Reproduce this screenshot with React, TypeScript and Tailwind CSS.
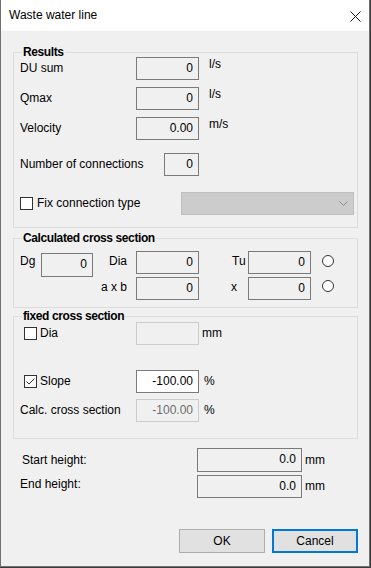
import type { ReactNode } from 'react';

type BoxKind = 'ro' | 'edit' | 'dis';

function Box({ value, className, kind = 'ro' }: { value: string; className: string; kind?: BoxKind }) {
  const look =
    kind === 'edit'
      ? 'border-[#7a7a7a] bg-white text-black'
      : kind === 'dis'
        ? 'border-[#cccccc] bg-[#f0f0f0] text-[#6d6d6d]'
        : 'border-[#7a7a7a] bg-[#f0f0f0] text-black';
  return (
    <div className={`flex items-center justify-end border pr-[5px] pb-[1px] ${look} ${className}`}>
      {value}
    </div>
  );
}

function Check({ checked = false }: { checked?: boolean }) {
  return (
    <div className="h-[13px] w-[13px] shrink-0 border border-[#333333] bg-white">
      {checked && (
        <svg width="11" height="11" viewBox="0 0 11 11" className="block">
          <polyline points="1.5,5.5 4,8 9.5,2.5" fill="none" stroke="#333333" strokeWidth="1" />
        </svg>
      )}
    </div>
  );
}

function Radio({ className }: { className: string }) {
  return <div className={`h-[12px] w-[12px] shrink-0 rounded-full border border-[#333333] bg-white ${className}`} />;
}

function Group({ title, className, children }: { title: string; className: string; children: ReactNode }) {
  return (
    <div className={`ml-[12px] mr-[11px] flex flex-col border border-[#dcdcdc] ${className}`}>
      <div className="-mt-[8px] -mb-[7px] ml-[8px] h-[15px] w-fit bg-[#f0f0f0] px-[1px] font-bold tracking-[-0.4px]">
        {title}
      </div>
      {children}
    </div>
  );
}

export default function App() {
  return (
    <div className="h-[568px] w-[371px] bg-[#3b3b3b] font-['Liberation_Sans',Arial,sans-serif] text-[12px] leading-[15px] text-black">
      <div className="flex h-[567px] w-[370px] flex-col border-x border-b border-[#707070] bg-[#f0f0f0]">
        {/* title bar */}
        <div className="flex h-[31px] shrink-0 items-center justify-between bg-white pl-[8px] pr-[8px]">
          <span>Waste water line</span>
          <svg width="11" height="11" viewBox="0 0 11 11" className="mt-[1px]">
            <line x1="0.5" y1="0.5" x2="10.5" y2="10.5" stroke="#111" strokeWidth="1" />
            <line x1="10.5" y1="0.5" x2="0.5" y2="10.5" stroke="#111" strokeWidth="1" />
          </svg>
        </div>

        <div className="flex flex-col">
          <Group title="Results" className="mt-[21px] pb-[12px]">
            <div className="mt-[4px] flex h-[23px] items-center pl-[6px]">
              <span className="w-[116px]">DU sum</span>
              <Box value="0" className="h-[23px] w-[63px]" />
              <span className="ml-[10px] self-start">l/s</span>
            </div>
            <div className="mt-[7px] flex h-[23px] items-center pl-[6px]">
              <span className="w-[116px]">Qmax</span>
              <Box value="0" className="h-[23px] w-[63px]" />
              <span className="ml-[10px] self-start">l/s</span>
            </div>
            <div className="mt-[7px] flex h-[23px] items-center pl-[6px]">
              <span className="w-[116px]">Velocity</span>
              <Box value="0.00" className="h-[23px] w-[63px]" />
              <span className="ml-[10px] self-start">m/s</span>
            </div>
            <div className="mt-[13px] flex h-[23px] items-center pl-[6px]">
              <span className="w-[144px]">Number of connections</span>
              <Box value="0" className="h-[23px] w-[35px]" />
            </div>
            <div className="mt-[16px] flex h-[23px] items-center pl-[6px]">
              <Check />
              <span className="ml-[4px]">Fix connection type</span>
              <div className="ml-auto mr-[3px] flex h-[23px] w-[173px] items-center justify-end border border-[#bfbfbf] bg-[#cccccc] pr-[5px]">
                <svg width="9" height="5" viewBox="0 0 9 5">
                  <polyline points="0.5,0.5 4.5,4.5 8.5,0.5" fill="none" stroke="#8a8a8a" strokeWidth="1" />
                </svg>
              </div>
            </div>
          </Group>

          <Group title="Calculated cross section" className="mt-[10px] pb-[7px]">
            <div className="mt-[12px] flex items-start pl-[6px]">
              <span className="mt-[3px] w-[21px]">Dg</span>
              <Box value="0" className="mt-[2px] h-[24px] w-[52px] items-start pt-[3px]" />
              <span className="mt-[3px] w-[43px] pr-[9px] text-right">Dia</span>
              <Box value="0" className="h-[23px] w-[63px]" />
              <span className="mt-[3px] w-[49px] pl-[33px]">Tu</span>
              <Box value="0" className="h-[23px] w-[63px]" />
              <Radio className="ml-[11px] mt-[4px]" />
            </div>
            <div className="flex items-start pl-[6px]">
              <span className="w-[73px]" />
              <span className="mt-[3px] w-[43px] pr-[9px] text-right">a x b</span>
              <Box value="0" className="h-[23px] w-[63px]" />
              <span className="mt-[3px] w-[49px] pl-[32px]">x</span>
              <Box value="0" className="h-[23px] w-[63px]" />
              <Radio className="ml-[11px] mt-[3px]" />
            </div>
          </Group>

          <Group title="fixed cross section" className="mt-[8px] pb-[16px]">
            <div className="mt-[5px] flex h-[23px] items-center pl-[10px]">
              <div className="flex w-[112px] items-center">
                <Check />
                <span className="ml-[3px]">Dia</span>
              </div>
              <Box value="" kind="dis" className="h-[23px] w-[63px]" />
              <span className="ml-[3px]">mm</span>
            </div>
            <div className="mt-[25px] flex h-[23px] items-center pl-[10px]">
              <div className="flex w-[112px] items-center">
                <Check checked />
                <span className="ml-[3px]">Slope</span>
              </div>
              <Box value="-100.00" kind="edit" className="h-[23px] w-[63px]" />
              <span className="ml-[5px]">%</span>
            </div>
            <div className="mt-[6px] flex h-[23px] items-center pl-[6px]">
              <span className="w-[116px]">Calc. cross section</span>
              <Box value="-100.00" kind="dis" className="h-[23px] w-[63px]" />
              <span className="ml-[5px]">%</span>
            </div>
          </Group>

          <div className="ml-[21px] mt-[9px] flex h-[24px] items-center">
            <span className="w-[175px]">Start height:</span>
            <Box value="0.0" className="h-[24px] w-[105px]" />
            <span className="ml-[3px]">mm</span>
          </div>
          <div className="ml-[19px] mt-[3px] flex h-[23px] items-center">
            <span className="w-[177px] self-start mt-[2px]">End height:</span>
            <Box value="0.0" className="h-[23px] w-[105px]" />
            <span className="ml-[3px]">mm</span>
          </div>

          <div className="mr-[11px] mt-[31px] flex justify-end gap-[7px]">
            <button className="h-[24px] w-[86px] border border-[#adadad] bg-[#e1e1e1]">OK</button>
            <button className="h-[24px] w-[86px] border-2 border-[#0078d7] bg-[#e1e1e1]">Cancel</button>
          </div>
        </div>
      </div>
    </div>
  );
}
